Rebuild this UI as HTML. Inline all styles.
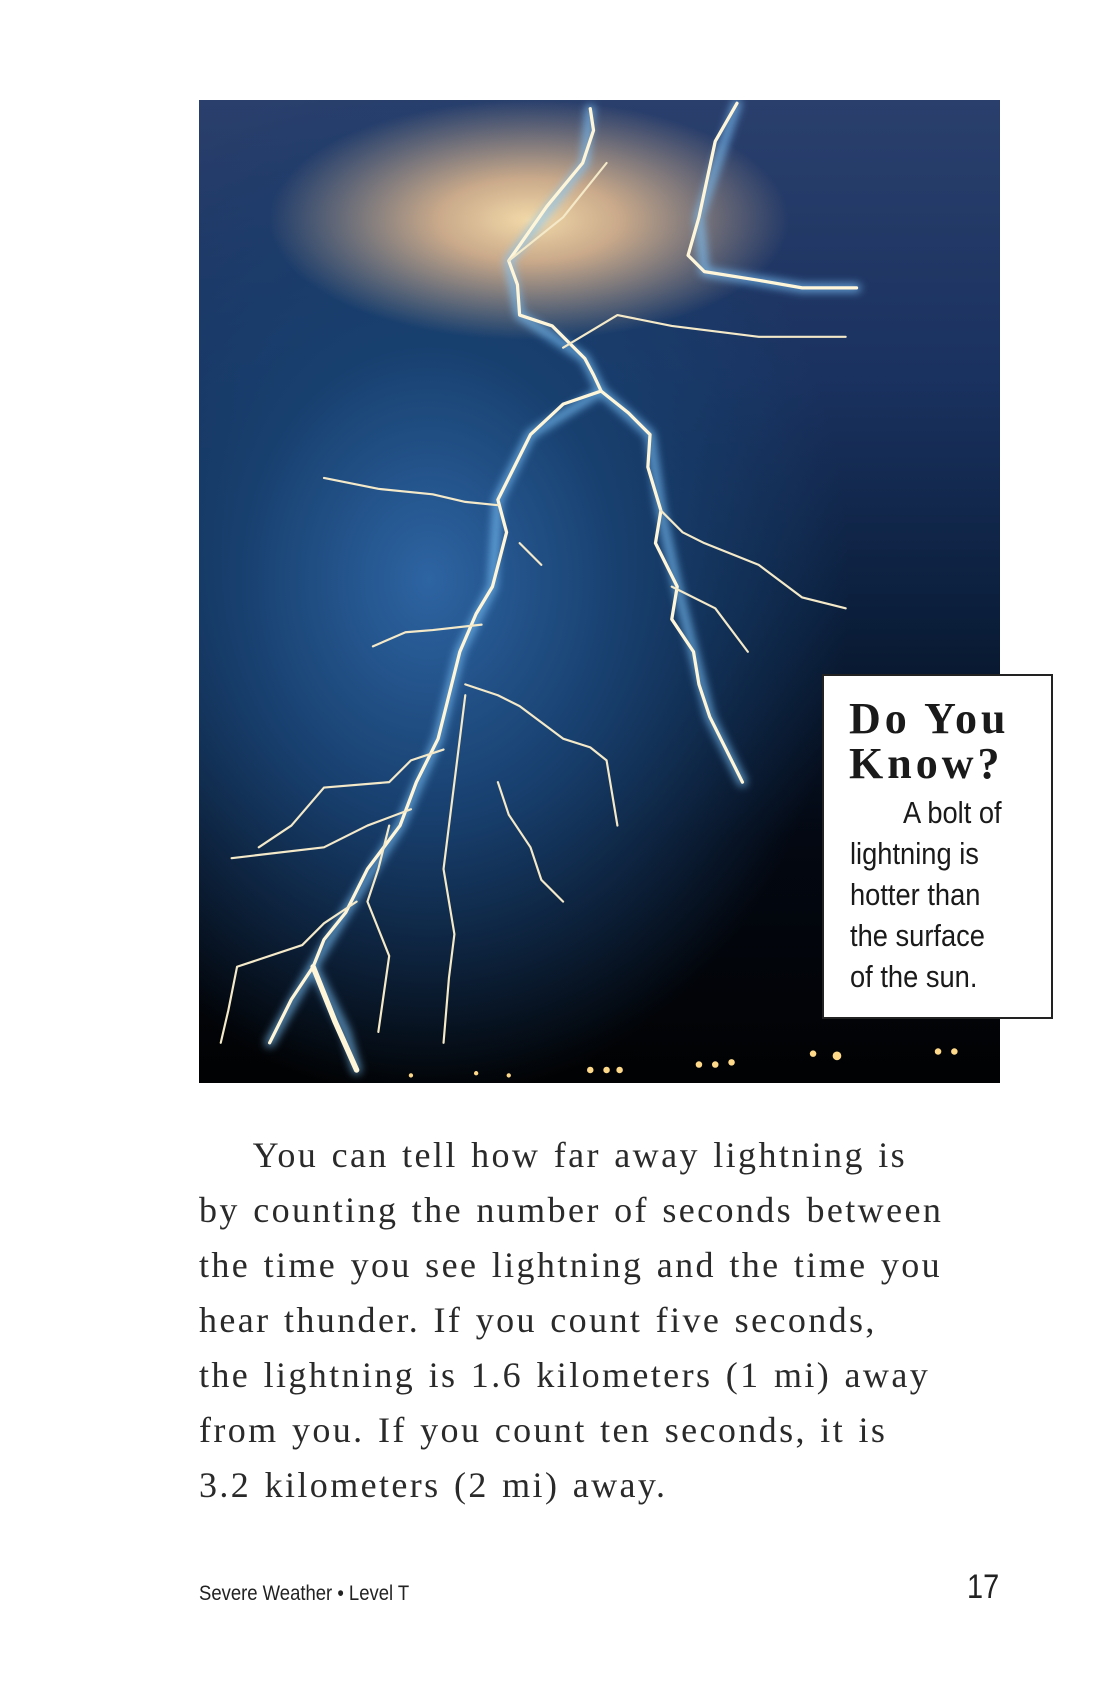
<!DOCTYPE html>
<html><head><meta charset="utf-8"><style>
html,body{margin:0;padding:0;background:#fff;width:1100px;height:1700px;overflow:hidden;position:relative}
.photo{position:absolute;left:199px;top:100px;width:801px;height:983px;overflow:hidden;
background:radial-gradient(ellipse 260px 120px at 330px 120px,#f2d9a8 0%,#c9a98a 35%,rgba(80,100,150,0) 100%),
radial-gradient(ellipse 420px 520px at 230px 480px,#2d64a2 0%,#18406f 45%,rgba(10,20,40,0) 100%),
linear-gradient(180deg,#2a3f6c 0%,#1a3260 28%,#0b1f3c 52%,#030812 75%,#010203 100%)}
.photo svg{position:absolute;left:0;top:0}
.box{position:absolute;left:822px;top:674px;width:231px;height:345px;background:#fff;border:2px solid #222;box-sizing:border-box}
.box h2{margin:0;position:absolute;left:25px;top:20px;font:bold 44px/45px "Liberation Serif",serif;letter-spacing:4px;color:#1a1a1a;white-space:nowrap}
.box p{margin:0;position:absolute;left:26px;top:116px;font:31px/41px "Liberation Sans",sans-serif;color:#1a1a1a;transform:scaleX(.88);transform-origin:0 0;white-space:nowrap}
.txt{position:absolute;left:199px;top:1128px;font:36px/55px "Liberation Serif",serif;color:#2a2a2a;letter-spacing:2.4px;word-spacing:2px;white-space:nowrap}
.foot{position:absolute;left:199px;top:1582px;font:21px "Liberation Sans",sans-serif;color:#222;transform:scaleX(.88);transform-origin:0 0;white-space:nowrap}
.num{position:absolute;left:967px;top:1568px;font:34px "Liberation Sans",sans-serif;color:#222;transform:scaleX(.85);transform-origin:0 0}
</style></head><body>
<div class="photo">
<svg width="801" height="983" viewBox="185 92 737 905" preserveAspectRatio="none">
<defs><filter id="g" x="-20%" y="-20%" width="140%" height="140%"><feGaussianBlur stdDeviation="4"/></filter></defs>
<g fill="none" stroke-linejoin="round" stroke-linecap="round">
<g stroke="#7fc8ff" stroke-width="8" opacity=".7" filter="url(#g)">
<path d="M545 100 L540 150 L470 240 L480 290 L540 330 L555 360 L490 400 L460 460 L455 540 L425 600 L405 680 L370 760 L320 840 L290 890 L250 960"/>
<path d="M555 360 L600 400 L610 470 L625 540 L640 600 L655 660 L685 720"/>
<path d="M680 95 L645 200 L650 250 L740 265 L790 265"/>
<path d="M290 890 L320 950 L330 985"/>
</g>
<g stroke="#fff6da" stroke-width="3">
<path d="M545 100 L548 120 L538 150 L505 190 L470 240 L478 262 L480 290 L510 300 L540 330 L548 345 L555 360 L520 372 L490 400 L475 430 L460 460 L468 490 L455 540 L440 565 L425 600 L415 640 L405 680 L385 720 L370 760 L340 800 L320 840 L300 865 L290 890 L270 920 L250 960"/>
<path d="M555 360 L580 380 L600 400 L598 430 L610 470 L605 500 L625 540 L620 570 L640 600 L645 630 L655 660 L670 690 L685 720"/>
<path d="M680 95 L660 130 L645 200 L635 235 L650 250 L700 258 L740 265 L790 265"/>
<path d="M290 890 L310 940 L330 985" stroke-width="5"/>
</g>
<g stroke="#f4e9c8" stroke-width="2">
<path d="M460 465 L430 462 L400 455 L350 450 L300 440"/>
<path d="M445 575 L400 580 L375 582 L345 595"/>
<path d="M430 630 L460 640 L480 650 L520 680 L545 688 L560 700 L565 730 L570 760"/>
<path d="M410 690 L380 700 L360 720 L300 725 L270 760 L240 780"/>
<path d="M380 745 L340 760 L300 780 L215 790"/>
<path d="M330 830 L300 850 L280 870 L220 890 L212 930 L205 960"/>
<path d="M430 640 L425 680 L420 720 L410 800 L420 860 L415 900 L410 960"/>
<path d="M460 720 L470 750 L490 780 L500 810 L520 830"/>
<path d="M610 470 L630 490 L650 500 L700 520 L740 550 L780 560"/>
<path d="M620 540 L660 560 L690 600"/>
<path d="M470 240 L520 200 L560 150"/>
<path d="M520 320 L570 290 L620 300 L700 310 L780 310"/>
<path d="M360 760 L350 800 L340 830 L360 880 L355 915 L350 950"/>
<path d="M480 500 L500 520"/>
</g>
<g fill="#ffd98a" stroke="none">
<circle cx="545" cy="985" r="3"/><circle cx="560" cy="985" r="3"/><circle cx="572" cy="985" r="3"/>
<circle cx="645" cy="980" r="3"/><circle cx="660" cy="980" r="3"/><circle cx="675" cy="978" r="3"/>
<circle cx="750" cy="970" r="3"/><circle cx="772" cy="972" r="4"/><circle cx="865" cy="968" r="3"/><circle cx="880" cy="968" r="3"/>
<circle cx="380" cy="990" r="2"/><circle cx="440" cy="988" r="2"/><circle cx="470" cy="990" r="2"/>
</g>
</g></svg>
</div>
<div class="box"><h2>Do You<br>Know?</h2>
<p>&nbsp;&nbsp;&nbsp;&nbsp;&nbsp;&nbsp;&nbsp;A bolt of<br>lightning is<br>hotter than<br>the surface<br>of the sun.</p></div>
<div class="txt">&nbsp;&nbsp;&nbsp;&nbsp;You can tell how far away lightning is<br>by counting the number of seconds between<br>the time you see lightning and the time you<br>hear thunder. If you count five seconds,<br>the lightning is 1.6 kilometers (1 mi) away<br>from you. If you count ten seconds, it is<br>3.2 kilometers (2 mi) away.</div>
<div class="foot">Severe Weather • Level T</div>
<div class="num">17</div>
</body></html>
